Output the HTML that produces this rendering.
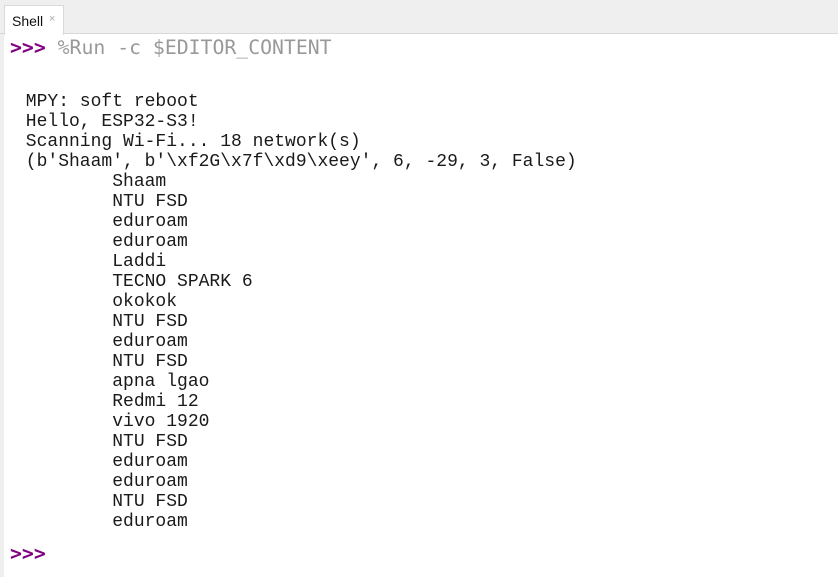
<!DOCTYPE html>
<html><head><meta charset="utf-8"><style>
html,body{margin:0;padding:0;width:838px;height:577px;overflow:hidden;background:#fff}
.top{position:absolute;left:0;top:0;width:838px;height:33px;background:#efefef;border-bottom:1px solid #d9d9d9}
.tab{position:absolute;left:4px;top:5px;width:58px;height:29px;background:#fff;border:1px solid #d9d9d9;border-bottom:none;font:14px "Liberation Sans",sans-serif;color:#111}
.tab span{position:absolute;left:7px;top:7px}
.tab i{position:absolute;left:44px;top:7px;font-style:normal;color:#aaa;font-size:11px}
.left{position:absolute;left:0;top:34px;width:4px;height:543px;background:#efefef}
.p{position:absolute;left:10px;font:19.8px "DejaVu Sans Mono",monospace;color:#999;white-space:pre;line-height:24px}
.p b{color:#800080}
.out{position:absolute;left:15px;top:92px;font:18px "Liberation Mono",monospace;line-height:20px;white-space:pre;color:#1a1a1a}
</style></head><body>
<div class="top"></div>
<div class="tab"><span>Shell</span><i>×</i></div>
<div class="left"></div>
<div class="p" style="top:36px"><b>&gt;&gt;&gt;</b> %Run -c $EDITOR_CONTENT</div>
<div class="out"> MPY: soft reboot
 Hello, ESP32-S3!
 Scanning Wi-Fi... 18 network(s)
 (b'Shaam', b'\xf2G\x7f\xd9\xeey', 6, -29, 3, False)
         Shaam
         NTU FSD
         eduroam
         eduroam
         Laddi
         TECNO SPARK 6
         okokok
         NTU FSD
         eduroam
         NTU FSD
         apna lgao
         Redmi 12
         vivo 1920
         NTU FSD
         eduroam
         eduroam
         NTU FSD
         eduroam</div>
<div class="p" style="top:542px"><b>&gt;&gt;&gt;</b></div>
</body></html>
